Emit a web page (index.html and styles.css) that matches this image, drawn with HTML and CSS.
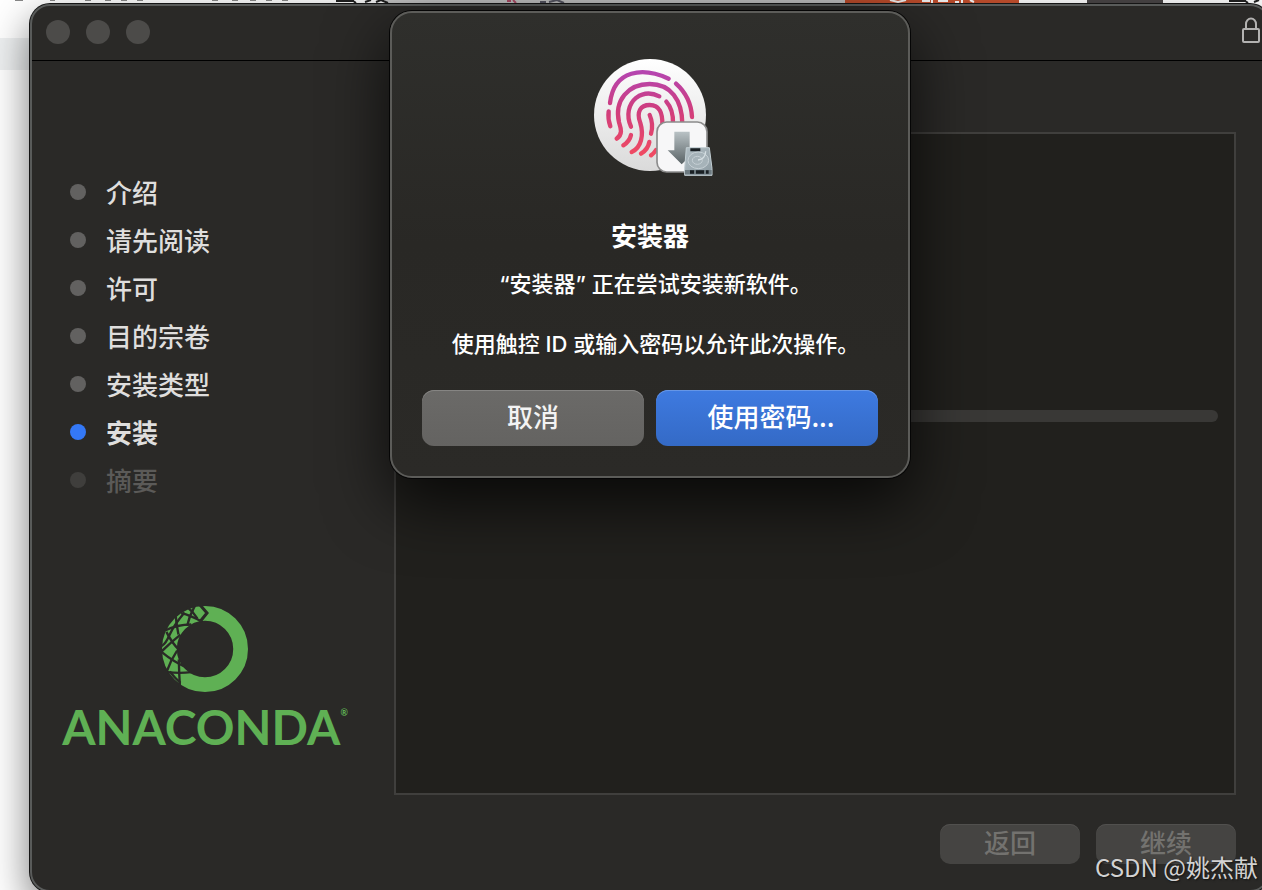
FILE: index.html
```html
<!DOCTYPE html>
<html lang="zh-CN">
<head>
<meta charset="utf-8">
<title>安装器</title>
<link rel="stylesheet" href="styles.css">
</head>
<body>
<div class="desktop">
  <svg class="backdrop" width="1262" height="4" viewBox="0 0 1262 4" aria-hidden="true">
    <rect x="385" width="460" height="4" fill="#cfcfcf"/>
    <rect x="845" width="174" height="4" fill="#c9522f"/>
    <rect x="1087" width="76" height="4" fill="#4a4647"/>
    <path d="M15 0h8M50 0h5M85 0h6M105 0h6M121 0h6M137 0h6M212 0h6M232 0h6M250 0h6M266 0h6M282 0h6" stroke="#888" stroke-width="2"/>
    <path d="M336 1l18 0M352 0l4 3M365 2l6-2M376 2l5-2M381 0l7 3M1229 1l17 0M1244 0l4 3M1254 2l5-2" stroke="#222" stroke-width="2"/>
    <path d="M507 1h4M513 0l3 3" stroke="#b8506c" stroke-width="2"/>
    <path d="M540 2h6M549 2l8-2M557 0l7 3" stroke="#5b5b68" stroke-width="2"/>
    <path d="M890 0l8 2 8-2M922 1h8M932 0v3M938 1h10M955 2h4M962 0v3M970 0l4 2" stroke="#fff" stroke-width="2" fill="none"/>
  </svg>
  <main class="window">
    <header class="titlebar">
      <div class="lights"><span class="light"></span><span class="light"></span><span class="light"></span></div>
      <svg class="lock" width="18" height="26" viewBox="0 0 18 26" fill="none" stroke="#b3b2b1" stroke-width="2" aria-hidden="true">
        <rect x="1" y="12" width="16" height="13" rx="1"/>
        <path d="M4 12V7a5 5.500 0 0 1 10 0v5"/>
      </svg>
    </header>
    <div class="content">
      <aside class="sidebar">
        <ol class="steps">
          <li class="step">介绍</li>
          <li class="step">请先阅读</li>
          <li class="step">许可</li>
          <li class="step">目的宗卷</li>
          <li class="step">安装类型</li>
          <li class="step current" aria-current="step">安装</li>
          <li class="step pending">摘要</li>
        </ol>
        <div class="brand">
          <svg class="ring" width="86" height="86" viewBox="37 33 256 256" aria-hidden="true">
            <circle cx="165" cy="161" r="106" fill="none" stroke="#5fb054" stroke-width="44"/>
            <g fill="none" stroke="#2a2927" stroke-width="7">
              <path stroke-width="9" d="M147 26L171 54L150 80"/>
              <path d="M94 54Q122 60 156 80"/>
              <path d="M134 34Q118 62 112 92"/>
              <path d="M112 36Q130 50 142 70"/>
              <path d="M78 64Q80 88 86 118"/>
              <path d="M104 52Q72 90 60 118T36 152"/>
              <path d="M46 106Q82 88 124 88"/>
              <path d="M50 110Q66 142 88 164"/>
              <path d="M92 118Q62 142 34 170"/>
              <path d="M34 168Q66 196 110 216"/>
              <path d="M82 166Q62 196 52 226"/>
              <path d="M54 230Q90 234 124 230"/>
              <path d="M87 192Q88 240 91 282"/>
              <path d="M60 228Q74 246 92 262"/>
            </g>
          </svg>
          <div class="wordmark">ANACONDA<sup class="mark">®</sup></div>
        </div>
      </aside>
      <section class="stage">
        <div class="panel">
          <div class="progress" role="progressbar" aria-label="安装"></div>
        </div>
        <div class="actions">
          <button class="nav" type="button" disabled>返回</button>
          <button class="nav" type="button" disabled>继续</button>
        </div>
      </section>
    </div>
    <div class="dialog" role="dialog" aria-labelledby="dialog-title">
      <svg class="touch" width="112" height="112" viewBox="42 42 336 336" aria-hidden="true">
        <defs>
          <linearGradient id="disc" x1="0" y1="0" x2="0" y2="1"><stop offset="0" stop-color="#fff"/><stop offset="1" stop-color="#dadada"/></linearGradient>
          <linearGradient id="ink" gradientUnits="userSpaceOnUse" x1="0" y1="80" x2="0" y2="330"><stop offset="0" stop-color="#b545b0"/><stop offset=".45" stop-color="#cf3d7e"/><stop offset="1" stop-color="#f04a62"/></linearGradient>
          <linearGradient id="arrow" x1="0" y1="0" x2="0" y2="1"><stop offset="0" stop-color="#b9c2c5"/><stop offset="1" stop-color="#596265"/></linearGradient>
          <linearGradient id="disk" x1="0" y1="0" x2="1" y2="1"><stop offset="0" stop-color="#b2bfc5"/><stop offset="1" stop-color="#8d9ba2"/></linearGradient>
        </defs>
        <circle cx="210" cy="210" r="168" fill="url(#disc)"/>
        <g fill="none" stroke="url(#ink)" stroke-width="13" stroke-linecap="round">
          <path d="M90 174C102 72 190 66 266 101"/>
          <path d="M288 116C318 143 334 178 336 216"/>
          <path d="M86 199Q83 222 91 244"/>
          <path d="M110 281C130 268 122 248 117 232C102 166 145 117 209 117C272 117 306 164 307 236"/>
          <path d="M153 245C138 210 145 178 169 158C190 143 216 143 238 154"/>
          <path d="M259 170C275 188 280 208 279 236"/>
          <path d="M155 321C184 308 192 270 181 234C168 200 182 180 209 180C239 180 248 204 247 240"/>
          <path d="M209 210C216 226 220 243 213 266"/>
          <path d="M130 301Q149 289 153 270"/>
          <path d="M183 326Q204 313 208 291"/>
          <path d="M213 331Q222 325 228 315"/>
        </g>
        <rect x="231" y="231" width="150" height="150" rx="29" fill="#f7f7f8" stroke="#8c8c8c" stroke-width="5"/>
        <path d="M283 260h46v56h20L305 358L263 316h20z" fill="url(#arrow)"/>
        <path d="M319 308h69l8 62v21h-82v-21z" fill="url(#disk)" stroke="#c3cfd4" stroke-width="3"/>
        <path d="M315 375h80v13h-80z" fill="#6d7a80"/>
        <path d="M330 376h12v10h-12zM348 376h24v10h-24zM378 376h8v10h-8zM331 310h30v9h-30z" fill="#1a2024"/>
        <ellipse cx="355" cy="346" rx="31" ry="25" fill="#a6b3b9" stroke="#c6d0d5" stroke-width="3"/>
        <ellipse cx="352" cy="346" rx="15" ry="12" fill="none" stroke="#c6d0d5" stroke-width="3"/>
        <path d="M354 345Q376 343 377 319" fill="none" stroke="#d6dfe3" stroke-width="4"/>
      </svg>
      <h1 class="title" id="dialog-title">安装器</h1>
      <p class="message">“安装器” 正在尝试安装新软件<span class="stop">。</span></p>
      <p class="message">使用触控 ID 或输入密码以允许此次操作<span class="stop">。</span></p>
      <div class="choices">
        <button class="choice" type="button">取消</button>
        <button class="choice primary" type="button">使用密码...</button>
      </div>
    </div>
  </main>
  <div class="watermark">CSDN @姚杰献</div>
</div>
</body>
</html>
```
FILE: styles.css
```css
* {
  box-sizing: border-box;
}

body {
  margin: 0;
  font-family: "Noto Sans CJK SC", sans-serif;
  color: #dfdedd;
}

button {
  font: inherit;
  border: 0;
  padding: 0;
}

.desktop {
  position: relative;
  display: flex;
  min-height: 100vh;
  padding: 4px 0 0 30px;
  overflow: hidden;
  background: linear-gradient(#fff 38px, #eef0f1 38px, #eef0f1 70px, #fff 70px);
}

.backdrop {
  position: absolute;
  left: 0;
  top: 0;
}

.window {
  position: relative;
  flex: 1;
  display: flex;
  flex-direction: column;
  margin-right: -8px;
  margin-bottom: -2px;
  border: 2px solid #595b5a;
  border-radius: 20px;
  background: #2a2927;
  box-shadow: 0 0 0 1px #151515, 0 16px 40px rgba(0, 0, 0, 0.55);
}

.titlebar {
  display: flex;
  align-items: center;
  justify-content: space-between;
  height: 55px;
  padding: 0 8px 2px 14px;
  border-bottom: 1px solid #000;
}

.lights {
  display: flex;
  gap: 16px;
}

.light {
  width: 24px;
  height: 24px;
  border-radius: 50%;
  background: #4c4b49;
}

.lock {
  margin-bottom: 4px;
}

.content {
  flex: 1;
  display: grid;
  grid-template-columns: 362px 1fr;
}

.sidebar {
  padding: 107px 0 0 32px;
}

.steps {
  margin: 0;
  padding: 0 0 0 6px;
  list-style: none;
}

.step {
  display: flex;
  align-items: center;
  gap: 20px;
  height: 48px;
  font-size: 26px;
  line-height: 46px;
  font-weight: 500;
}

.step::before {
  content: "";
  width: 16px;
  height: 16px;
  border-radius: 50%;
  background: #626160;
}

.current {
  font-weight: 700;
}

.current::before {
  background: #3478f6;
}

.pending {
  color: #5b5a58;
}

.pending::before {
  background: #3f3e3c;
}

.brand {
  display: flex;
  flex-direction: column;
  align-items: center;
  width: 282px;
  margin-top: 102px;
}

.ring {
  display: block;
}

.wordmark {
  display: flex;
  align-items: flex-start;
  margin-top: 11px;
  font-family: Lato, sans-serif;
  font-size: 48px;
  line-height: 48px;
  font-weight: 700;
  color: #5fb054;
}

.mark {
  font-size: 9px;
  line-height: 20px;
}

.stage {
  display: flex;
  flex-direction: column;
  padding: 71px 32px 26px 0;
}

.panel {
  flex: 1;
  padding: 276px 16px 0;
  border: 2px solid #403f3d;
  background: #21201d;
}

.progress {
  height: 12px;
  border-radius: 6px;
  background: #393836;
}

.actions {
  display: flex;
  justify-content: flex-end;
  gap: 16px;
  margin-top: 29px;
}

.nav {
  width: 140px;
  height: 40px;
  padding-bottom: 4px;
  border-radius: 10px;
  background: #454442;
  box-shadow: inset 0 1px #51504e;
  color: #73726f;
  font-size: 26px;
  line-height: 36px;
  font-weight: 500;
}

.dialog {
  position: absolute;
  left: 50%;
  top: 5px;
  width: 520px;
  padding: 46px 30px 30px;
  transform: translateX(-50%);
  border: 2px solid #5c5c59;
  border-radius: 22px;
  background: linear-gradient(#2f2f2c, #292825 50%, #2b2a27);
  box-shadow: 0 0 0 1px #050505, 0 24px 64px rgba(0, 0, 0, 0.75);
  color: #fff;
  text-align: center;
}

.touch {
  display: block;
  margin: 0 auto;
  overflow: visible;
}

.title {
  margin: 44px 0 0;
  font-size: 26px;
  line-height: 40px;
  font-weight: 700;
}

.message {
  margin: 14px 0 0;
  font-family: Inter, "Noto Sans CJK SC", sans-serif;
  font-size: 22px;
  line-height: 30px;
  font-weight: 500;
}

.message + .message {
  margin-top: 30px;
}

.stop {
  font-feature-settings: "halt";
}

.choices {
  display: grid;
  grid-template-columns: 1fr 1fr;
  gap: 12px;
  margin-top: 31px;
}

.choice {
  height: 56px;
  padding-bottom: 5px;
  border-radius: 12px;
  background: linear-gradient(#6b6a68, #646361);
  box-shadow: inset 0 1px #868583;
  color: #f3f3f3;
  font-size: 26px;
  line-height: 40px;
  font-weight: 500;
}

.primary {
  padding-left: 8px;
  background: linear-gradient(#3e7ae0, #346ac6);
  box-shadow: inset 0 1px #6696e6;
  color: #fff;
}

.watermark {
  position: absolute;
  right: 4px;
  bottom: 5px;
  color: #d2d2d2;
  font-size: 24px;
  line-height: 36px;
  text-shadow: 1px 1px 2px rgba(0, 0, 0, 0.6);
}
```
